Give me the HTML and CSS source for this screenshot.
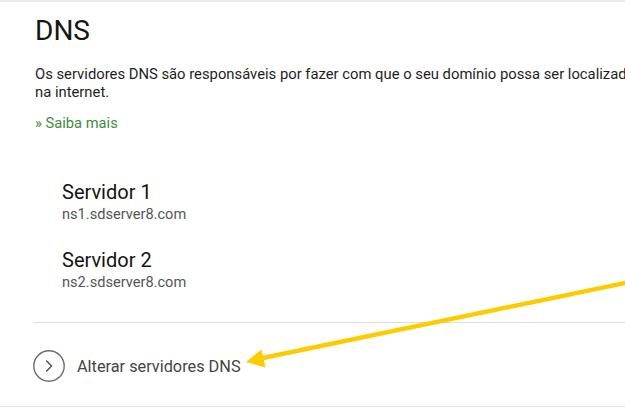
FILE: index.html
```html
<!DOCTYPE html>
<html lang="pt-BR">
<head>
<meta charset="utf-8">
<title>DNS</title>
<link rel="stylesheet" href="styles.css">
</head>
<body>
<div class="panel">
  <h1 class="title">DNS</h1>
  <p class="intro">Os servidores DNS são responsáveis por fazer com que o seu domínio possa ser localizado na internet.</p>
  <a class="more" href="#">» Saiba mais</a>
  <ul class="servers">
    <li class="server">
      <div class="server-name">Servidor 1</div>
      <div class="server-host">ns1.sdserver8.com</div>
    </li>
    <li class="server">
      <div class="server-name">Servidor 2</div>
      <div class="server-host">ns2.sdserver8.com</div>
    </li>
  </ul>
  <div class="divider"></div>
  <a class="action" href="#">
    <span class="action-icon">
      <svg width="32" height="32" viewBox="0 0 32 32"><circle cx="16" cy="16" r="15.2" fill="none" stroke="#6b6b6b" stroke-width="1.4"/><path d="M13.6 11 L18.6 16 L13.6 21" fill="none" stroke="#555" stroke-width="1.5" stroke-linecap="round" stroke-linejoin="round"/></svg>
    </span>
    <span class="action-label">Alterar servidores DNS</span>
  </a>
  <svg class="annotation" width="625" height="408" viewBox="0 0 625 408">
    <line x1="632" y1="281.5" x2="258" y2="359" stroke="#fccc00" stroke-width="4.5"/>
    <polygon points="246,362 261.5,349.5 265.5,367.5" fill="#fccc00"/>
  </svg>
</div>
</body>
</html>
```
FILE: styles.css
```css
html, body {
  margin: 0;
  padding: 0;
  background: #fff;
  overflow: hidden;
}
body {
  font-family: Roboto, "Liberation Sans", Arial, sans-serif;
  color: #222;
}
.panel {
  position: relative;
  width: 590px;
  height: 404px;
  border-top: 2px solid #ececec;
  border-bottom: 1px solid #e6e6e6;
  padding-left: 35px;
  box-sizing: content-box;
  overflow: hidden;
  display: flex;
  flex-direction: column;
  align-items: flex-start;
}
.title {
  margin: 12px 0 0;
  font-size: 28px;
  line-height: 34px;
  font-weight: 400;
  color: #151515;
}
.intro {
  margin: 17px 0 0;
  width: 608px;
  flex-shrink: 0;
  font-size: 14.8px;
  line-height: 18px;
  color: #1e1e1e;
}
.more {
  margin-top: 13px;
  font-size: 14.7px;
  line-height: 18px;
  color: #3c8c3f;
  text-decoration: none;
}
.servers {
  list-style: none;
  margin: 48px 0 0;
  padding: 0 0 0 27px;
  display: flex;
  flex-direction: column;
  gap: 25px;
}
.server-name {
  font-size: 20px;
  line-height: 24px;
  color: #141414;
}
.server-host {
  margin-top: 1px;
  font-size: 14.6px;
  line-height: 18px;
  color: #555;
}
.divider {
  margin: 31px 0 0 -1px;
  height: 1px;
  background: #dcdcdc;
  align-self: stretch;
}
.action {
  margin: 27px 0 0 -2px;
  display: flex;
  align-items: center;
  gap: 12px;
  text-decoration: none;
  color: #444;
}
.action-icon {
  display: block;
  width: 32px;
  height: 32px;
}
.action-icon svg {
  display: block;
}
.action-label {
  font-size: 16.3px;
  color: #454545;
}
.annotation {
  position: absolute;
  left: 0;
  top: -2px;
  pointer-events: none;
}
```
